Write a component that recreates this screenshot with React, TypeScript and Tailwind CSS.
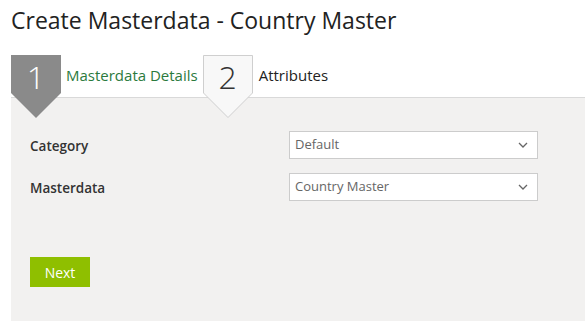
import React from "react";

function StepBadge({ n, active }: { n: number; active: boolean }) {
  return (
    <div className="relative w-[50px] h-[63px] shrink-0">
      <svg className="absolute inset-0" width="50" height="63" viewBox="0 0 50 63">
        {active ? (
          <polygon points="0,0 50,0 50,38 25,63 0,38" fill="#8a8a8a" />
        ) : (
          <polygon points="0.5,0.5 49.5,0.5 49.5,38 25,62.5 0.5,38" fill="#f8f8f8" stroke="#cfcfcf" strokeWidth="1" />
        )}
      </svg>
      <div
        className={`relative h-[44px] flex items-center justify-center text-[32px] font-light ${
          active ? "text-white" : "text-[#333]"
        }`}
      >
        {n}
      </div>
    </div>
  );
}

function Select({ value }: { value: string }) {
  return (
    <div className="w-[249px] h-[28px] bg-white border border-[#cccccc] flex items-center justify-between pl-[5px] pr-[9px]">
      <span className="text-[13px] text-[#666]">{value}</span>
      <svg width="10" height="6" viewBox="0 0 10 6">
        <polyline points="1,1 5,5 9,1" fill="none" stroke="#666" strokeWidth="1.3" />
      </svg>
    </div>
  );
}

export default function App() {
  return (
    <div className="w-[585px] h-[324px] bg-white" style={{ fontFamily: '"Open Sans", "Noto Sans", sans-serif' }}>
      {/* 标题 */}
      <h1 className="px-[11px] pt-[4px] text-[23px] leading-[33px] text-[#222]">Create Masterdata - Country Master</h1>

      {/* 步骤 */}
      <div className="relative z-10 mt-[18px] h-[42px] flex items-start pl-[11px]">
        <StepBadge n={1} active />
        <div className="h-[40px] flex items-center pl-[5px] pr-[5px] text-[15px] text-[#2b7a3d]">Masterdata Details</div>
        <StepBadge n={2} active={false} />
        <div className="h-[40px] flex items-center pl-[6px] text-[15px] text-[#222]">Attributes</div>
      </div>

      {/* 表单 */}
      <div className="ml-[11px] h-[224px] bg-[#f2f1f0] border-t border-[#d9d9d9] pl-[19px] pt-[33px]">
        <div className="flex flex-col gap-[14px]">
          <div className="flex items-center">
            <div className="w-[259px] text-[13.5px] font-semibold text-[#333] pt-[2px]">Category</div>
            <Select value="Default" />
          </div>
          <div className="flex items-center">
            <div className="w-[259px] text-[13.5px] font-semibold text-[#333] pt-[2px]">Masterdata</div>
            <Select value="Country Master" />
          </div>
        </div>
        <button className="mt-[56px] w-[60px] h-[30px] bg-[#8fbf00] text-white text-[14px] flex items-center justify-center">
          Next
        </button>
      </div>
    </div>
  );
}
